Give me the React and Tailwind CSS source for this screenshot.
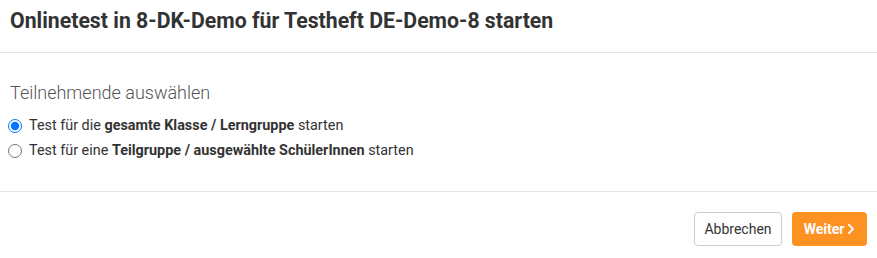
import { FaChevronRight } from "react-icons/fa";

export default function App() {
  return (
    <div className="w-[877px] h-[258px] bg-white text-[#333] font-['Roboto',sans-serif] flex flex-col">
      <div className="px-[10px] pt-[8px] pb-[19px] border-b border-[#e5e5e5]">
        <h4 className="text-[21.25px] leading-[25px] font-bold">
          Onlinetest in 8-DK-Demo für Testheft DE-Demo-8 starten
        </h4>
      </div>

      <div className="px-[10px] pt-[29px] pb-[28px] border-b border-[#e5e5e5]">
        <h5 className="text-[18px] leading-[22px] font-light text-[#555] mb-[9px]">
          Teilnehmende auswählen
        </h5>
        <label className="flex items-center gap-[7px] h-[25px] text-[14.4px]">
          <input type="radio" name="teilnehmer" defaultChecked className="w-[14px] h-[14px] -ml-[2px]" />
          <span>
            Test für die <b>gesamte Klasse / Lerngruppe</b> starten
          </span>
        </label>
        <label className="flex items-center gap-[7px] h-[25px] text-[14.4px]">
          <input type="radio" name="teilnehmer" className="w-[14px] h-[14px] -ml-[2px]" />
          <span>
            Test für eine <b>Teilgruppe / ausgewählte SchülerInnen</b> starten
          </span>
        </label>
      </div>

      <div className="flex justify-end gap-[10px] px-[10px] pt-[20px] pb-[12px]">
        <button className="h-[34px] w-[88px] border border-[#ccc] rounded-[4px] text-[14px] text-[#333] bg-white">
          Abbrechen
        </button>
        <button className="h-[34px] w-[75px] rounded-[4px] text-[14px] font-bold text-white bg-[#fd9222] flex items-center justify-center gap-[3px]">
          Weiter <FaChevronRight className="w-[8px] h-[12px]" />
        </button>
      </div>
    </div>
  );
}
